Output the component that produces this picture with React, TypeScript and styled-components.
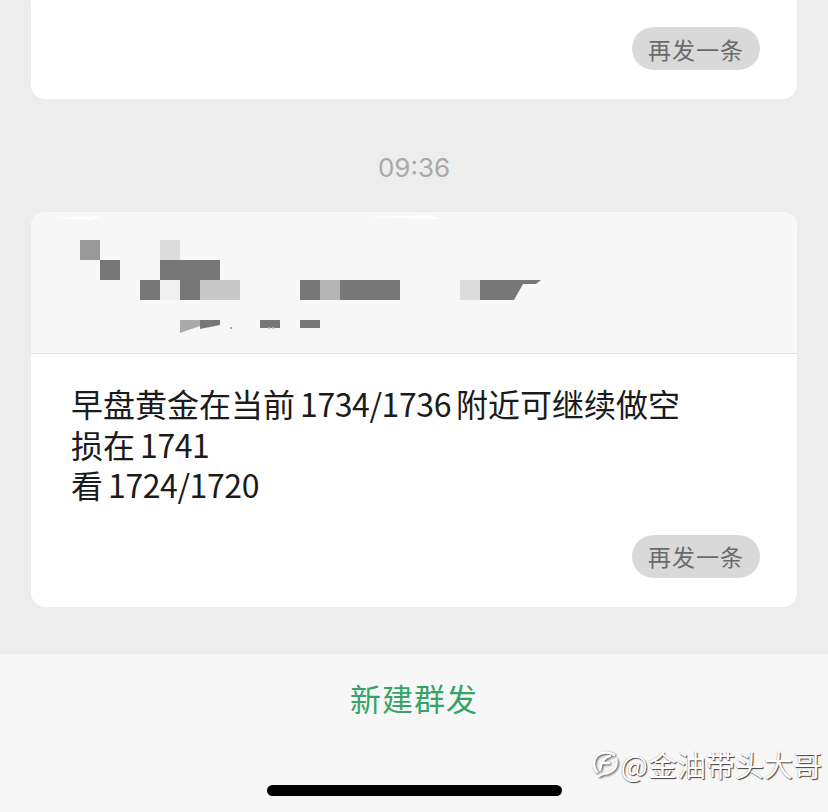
import React from 'react';
import styled, { createGlobalStyle } from 'styled-components';

const GlobalStyle = createGlobalStyle`
  html, body {
    margin: 0;
    padding: 0;
    background: #ededed;
  }
  body {
    font-family: "Noto Sans CJK SC", "Liberation Sans", sans-serif;
  }
`;

// blocks of the blurred sender header, in header coordinates
const mosaic: [number, number, number, number, string][] = [
  [49, 28, 20, 20, '#999999'],
  [129, 28, 20, 20, '#dcdcdc'],
  [69, 48, 20, 20, '#777777'],
  [129, 48, 60, 20, '#777777'],
  [109, 68, 20, 20, '#777777'],
  [129, 68, 20, 20, '#f0f0f0'],
  [149, 68, 20, 20, '#777777'],
  [169, 68, 40, 20, '#c8c8c8'],
  [269, 68, 20, 20, '#777777'],
  [289, 68, 20, 20, '#b5b5b5'],
  [309, 68, 60, 20, '#777777'],
  [429, 68, 20, 20, '#dcdcdc'],
  [229, 108, 20, 8, '#777777'],
  [269, 108, 20, 8, '#777777'],
];

const YouTime = () => {
  return (
    <Page>
      <GlobalStyle />
      <Feed>
        <Card $cut>
          <Actions>
            <ResendButton>再发一条</ResendButton>
          </Actions>
        </Card>
        <Time>09:36</Time>
        <Card>
          <Header>
            <svg width="766" height="141" viewBox="0 0 766 141">
              <path d="M20 6 L70 4 L60 8 Z" fill="#ffffff" opacity="0.8" />
              <path d="M330 5 L400 3 L410 7 Z" fill="#ffffff" opacity="0.8" />
              {mosaic.map(([x, y, w, h, c], i) => (
                <rect key={i} x={x} y={y} width={w} height={h} fill={c} />
              ))}
              <path d="M449 68 H510 L505 72 H492 L483 88 H449 Z" fill="#777777" />
              <path d="M149 108 H169 V114 L149 121 Z" fill="#aaaaaa" />
              <path d="M169 108 H189 V113 L169 117 Z" fill="#777777" />
              <circle cx="200" cy="116" r="1" fill="#888" />
              <circle cx="238" cy="116" r="1" fill="#bbb" />
              <circle cx="242" cy="116" r="1" fill="#bbb" />
            </svg>
          </Header>
          <Body>
            <Message>
              <Line>
                早盘黄金在当前<Num>1734/1736</Num>附近可继续做空
              </Line>
              <Line>
                损在<Num>1741</Num>
              </Line>
              <Line>
                看<Num>1724/1720</Num>
              </Line>
            </Message>
            <Actions>
              <ResendButton>再发一条</ResendButton>
            </Actions>
          </Body>
        </Card>
      </Feed>
      <BottomBar>
        <NewButton>新建群发</NewButton>
        <HomeIndicator />
        <Watermark>
          <LogoMark width="28" height="32" viewBox="0 0 28 32">
            <path
              d="M6 24 C2 20 2 12 6 8 C10 4 18 3 23 7"
              fill="none"
              stroke="#fff"
              strokeWidth="2.4"
              strokeLinecap="round"
            />
            <path
              d="M25 11 C27 17 24 23 17 25 C13 26 10 26 8 28"
              fill="none"
              stroke="#fff"
              strokeWidth="2.4"
              strokeLinecap="round"
            />
            <path
              d="M9 22 C10 15 12 9 19 8 M10 15 H18"
              fill="none"
              stroke="#fff"
              strokeWidth="2.4"
              strokeLinecap="round"
            />
          </LogoMark>
          <span>@金油带头大哥</span>
        </Watermark>
      </BottomBar>
    </Page>
  );
};

export default YouTime;

const Page = styled.div`
  width: 828px;
  height: 812px;
  background-color: #ededed;
  display: flex;
  flex-direction: column;
  overflow: hidden;
  position: relative;
`;

const Feed = styled.div`
  display: flex;
  flex-direction: column;
  padding: 0 31px;
`;

const Card = styled.div<{ $cut?: boolean }>`
  background-color: #fff;
  border-radius: ${(p) => (p.$cut ? '0 0 14px 14px' : '14px')};
  overflow: hidden;
  padding: ${(p) => (p.$cut ? '27px 37px 29px' : '0')};
  box-shadow: 0 0 1px rgba(0, 0, 0, 0.04);
`;

const Actions = styled.div`
  display: flex;
  justify-content: flex-end;
`;

const ResendButton = styled.div`
  height: 43px;
  width: 128px;
  border-radius: 22px;
  background-color: #d9d9d9;
  color: #6a6a6a;
  font-size: 23px;
  display: flex;
  align-items: center;
  justify-content: center;
  letter-spacing: 1px;
`;

const Time = styled.div`
  margin: 52px 0 27px;
  line-height: 34px;
  text-align: center;
  font-family: Inter, "Noto Sans CJK SC", sans-serif;
  font-size: 26px;
  color: #a9a9a9;
`;

const Header = styled.div`
  height: 141px;
  background-color: #f7f7f7;
  border-bottom: 1px solid #e3e3e3;
  display: flex;
`;

const Body = styled.div`
  padding: 29px 37px 29px 40px;
  display: flex;
  flex-direction: column;
  gap: 30px;
`;

const Message = styled.div`
  display: flex;
  flex-direction: column;
  font-size: 32px;
  color: #1b1b1b;
`;

const Line = styled.div`
  height: 40.5px;
  line-height: 40.5px;
  white-space: nowrap;
`;

const Num = styled.span`
  margin: 0 5px;
  letter-spacing: -0.4px;
`;

const BottomBar = styled.div`
  height: 158px;
  margin-top: 47px;
  background-color: #f7f7f7;
  display: flex;
  flex-direction: column;
  align-items: center;
  position: relative;
`;

const NewButton = styled.div`
  margin-top: 22px;
  line-height: 44px;
  font-size: 31px;
  color: #35a466;
  letter-spacing: 1px;
`;

const HomeIndicator = styled.div`
  margin-top: 65px;
  width: 295px;
  height: 11px;
  border-radius: 6px;
  background-color: #000;
`;

const Watermark = styled.div`
  position: absolute;
  right: 6px;
  bottom: 30px;
  display: flex;
  align-items: center;
  gap: 2px;
  font-size: 29px;
  line-height: 36px;
  color: #fff;
  text-shadow: 1px 1px 1px rgba(0, 0, 0, 0.75), -0.5px -0.5px 0 rgba(0, 0, 0, 0.35);
`;

const LogoMark = styled.svg`
  filter: drop-shadow(1px 1px 0.8px rgba(0, 0, 0, 0.7));
`;
